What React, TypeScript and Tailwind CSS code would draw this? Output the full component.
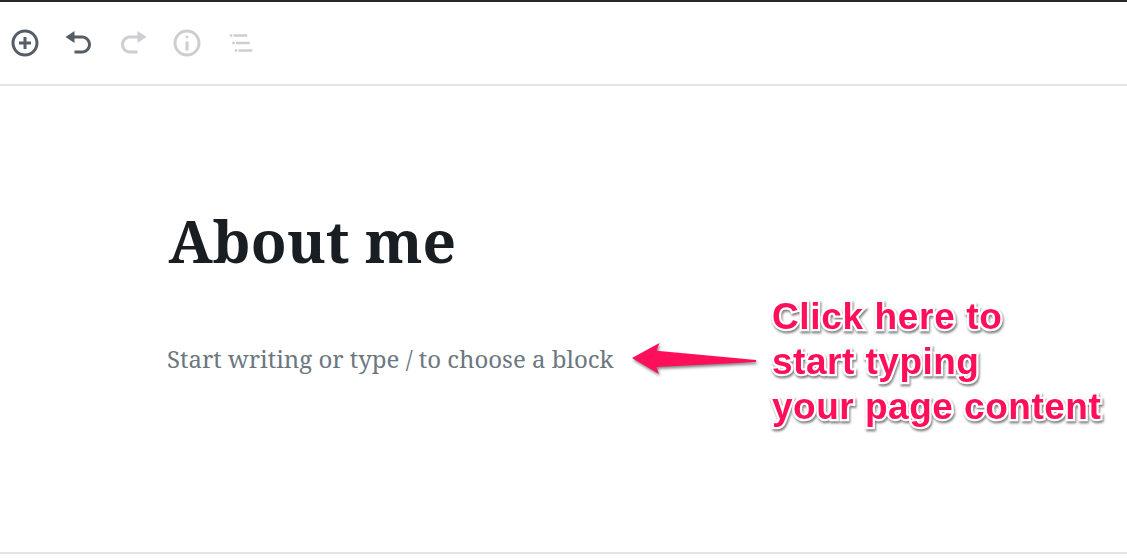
const tools = [
  {
    label: 'Add block',
    box: '0 0 20 20',
    tone: 'text-[#555d66]',
    d: 'M10 1c-5 0-9 4-9 9s4 9 9 9 9-4 9-9-4-9-9-9zm0 16c-3.9 0-7-3.1-7-7s3.1-7 7-7 7 3.1 7 7-3.1 7-7 7zm1-11H9v3H6v2h3v3h2v-3h3V9h-3V6z',
  },
  {
    label: 'Undo',
    box: '0 0 20 20',
    tone: 'text-[#555d66]',
    d: 'M12 5H7V2L1 6l6 4V7h5c2.2 0 4 1.8 4 4s-1.8 4-4 4H7v2h5c3.3 0 6-2.7 6-6s-2.7-6-6-6z',
  },
  {
    label: 'Redo',
    box: '0 0 20 20',
    tone: 'text-[#ccced1]',
    d: 'M8 5h5V2l6 4-6 4V7H8c-2.2 0-4 1.8-4 4s1.8 4 4 4h5v2H8c-3.3 0-6-2.7-6-6s2.7-6 6-6z',
  },
  {
    label: 'Content structure',
    box: '0 0 20 20',
    tone: 'text-[#ccced1]',
    d: 'M9 15h2V9H9v6zm1-10c-.5 0-1 .5-1 1s.5 1 1 1 1-.5 1-1-.5-1-1-1zm0-4c-5 0-9 4-9 9s4 9 9 9 9-4 9-9-4-9-9-9zm0 16c-3.9 0-7-3.1-7-7s3.1-7 7-7 7 3.1 7 7-3.1 7-7 7z',
  },
  {
    label: 'Block navigation',
    box: '0 0 24 24',
    tone: 'text-[#ccced1]',
    d: 'M5 5H3v2h2V5zm3 8h11v-2H8v2zm9-8H6v2h11V5zM7 11H5v2h2v-2zm0 8h2v-2H7v2zm3-2v2h11v-2H10z',
  },
];

export default function App() {
  return (
    <div className="flex h-[559px] w-full flex-col overflow-hidden border-t-2 border-[#23282d] bg-white">
      <header className="flex h-[84px] shrink-0 items-center gap-6 border-b-2 border-[#e2e4e7] pl-2.5">
        {tools.map((t) => (
          <button key={t.label} aria-label={t.label} className={t.tone}>
            <svg viewBox={t.box} className="block size-[30px]" fill="currentColor">
              <path d={t.d} />
            </svg>
          </button>
        ))}
      </header>
      <main className="relative h-[468px] shrink-0 border-b-2 border-[#e2e4e7] pl-[167px] pt-[114px] font-['Noto_Serif','Droid_Serif',serif]">
        <h1 className="w-max whitespace-nowrap pl-[1.5px] text-[58.6px] font-bold leading-[80px] text-[#191e23]">
          About me
        </h1>
        <p className="mt-[59px] w-max whitespace-nowrap text-[24px] leading-[40px] text-[#6c7781]">
          Start writing or type / to choose a block
        </p>
        <svg
          className="absolute left-[625px] top-[249px] drop-shadow-[1px_2px_1.5px_rgba(0,0,0,0.5)]"
          width="140"
          height="45"
          viewBox="0 0 140 45"
        >
          <path d="M7 23 34.5 8 31.5 15.8 131 25V27L31.5 32 34 39Z" fill="#ff0f59" />
        </svg>
        <div className="absolute left-[772px] top-[208px] whitespace-nowrap font-['Liberation_Sans',Arial,sans-serif] text-[37px] font-bold leading-[45px] tracking-[0.5px] text-[#ff0f59] drop-shadow-[1.5px_2px_1px_rgba(0,0,0,0.5)] [-webkit-text-stroke:4.5px_white] [paint-order:stroke_fill] [stroke-linejoin:round]">
          <div className="tracking-[0.65px]">Click here to</div>
          <div>start typing</div>
          <div>your page content</div>
        </div>
      </main>
    </div>
  );
}
